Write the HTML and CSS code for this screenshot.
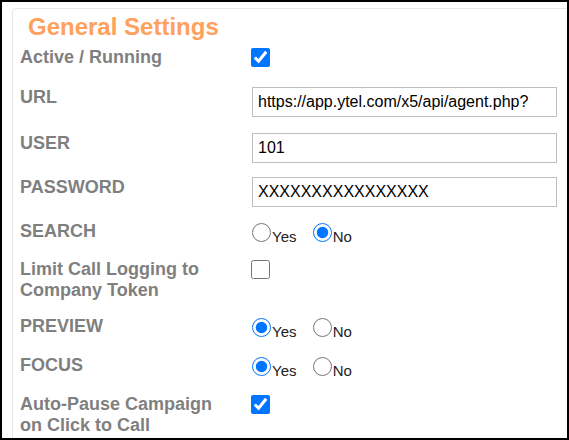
FILE: index.html
```html
<!DOCTYPE html>
<html lang="en">
<head>
    <meta charset="UTF-8">
    <meta name="viewport" content="width=device-width, initial-scale=1.0">
    <title>General Settings</title>
    <link rel="stylesheet" href="styles.css">
</head>
<body>
    <div class="frame">
        <div class="card">
            <h2 class="card-title">General Settings</h2>
            <form class="settings">
                <div class="label">Active / Running</div>
                <div class="value"><input type="checkbox" class="check" checked></div>

                <div class="label">URL</div>
                <div class="value"><input type="text" class="text-input" value="https://app.ytel.com/x5/api/agent.php?"></div>

                <div class="label">USER</div>
                <div class="value"><input type="text" class="text-input" value="101"></div>

                <div class="label">PASSWORD</div>
                <div class="value"><input type="text" class="text-input" value="XXXXXXXXXXXXXXXX"></div>

                <div class="label">SEARCH</div>
                <div class="value radios">
                    <label class="choice"><input type="radio" name="search">Yes</label>
                    <label class="choice"><input type="radio" name="search" checked>No</label>
                </div>

                <div class="label">Limit Call Logging to Company Token</div>
                <div class="value"><input type="checkbox" class="check"></div>

                <div class="label">PREVIEW</div>
                <div class="value radios">
                    <label class="choice"><input type="radio" name="preview" checked>Yes</label>
                    <label class="choice"><input type="radio" name="preview">No</label>
                </div>

                <div class="label">FOCUS</div>
                <div class="value radios">
                    <label class="choice"><input type="radio" name="focus" checked>Yes</label>
                    <label class="choice"><input type="radio" name="focus">No</label>
                </div>

                <div class="label">Auto-Pause Campaign on Click to Call</div>
                <div class="value"><input type="checkbox" class="check" checked></div>
            </form>
        </div>
    </div>
</body>
</html>
```

FILE: styles.css
```css
body {
    margin: 0;
    font-family: "Liberation Sans", Arial, sans-serif;
    background-color: white;
}

.frame {
    width: 569px;
    height: 440px;
    box-sizing: border-box;
    border: 2px solid #000;
    overflow: hidden;
}

.card {
    width: 600px;
    height: 480px;
    margin: 6px 0 0 10px;
    padding: 0 0 0 7px;
    border: 1px solid #e6e6e6;
    border-radius: 4px;
    box-sizing: border-box;
}

.card-title {
    margin: 4px 0 0 8px;
    font-size: 24px;
    line-height: 28px;
    font-weight: bold;
    color: #ffa05c;
}

.settings {
    display: grid;
    grid-template-columns: 215px 1fr;
    grid-template-rows: 40px 46px 44px 44px 38px 57px 39px 39px 42px;
    column-gap: 16px;
    margin-top: 6px;
}

.label {
    font-size: 18px;
    line-height: 21px;
    font-weight: bold;
    color: #7f7f7f;
}

.check {
    display: block;
    width: 19px;
    height: 19px;
    margin: 1px 0 0 0;
}

.text-input {
    display: block;
    width: 305px;
    height: 30px;
    margin: 0 0 0 1px;
    padding: 0 5px;
    box-sizing: border-box;
    border: 1px solid #bfbfbf;
    border-radius: 0;
    font-family: "Liberation Sans", Arial, sans-serif;
    font-size: 16px;
    color: #000;
    outline: none;
}

.radios {
    padding-top: 2px;
    font-size: 15px;
    line-height: 21px;
    color: #222;
}

.choice {
    margin-right: 11px;
}

.choice input {
    width: 19px;
    height: 19px;
    margin: 0 1px 0 1px;
    vertical-align: baseline;
}
```
